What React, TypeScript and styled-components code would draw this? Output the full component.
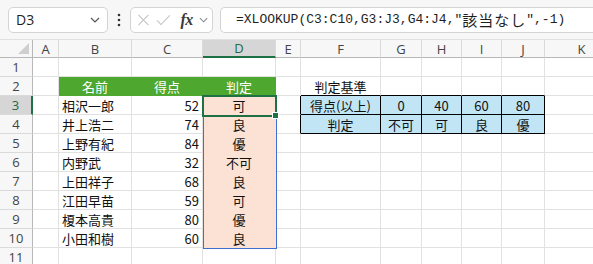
import React from "react";
import styled, { createGlobalStyle } from "styled-components";

const GlobalStyle = createGlobalStyle`
  html, body { margin: 0; padding: 0; background: #ffffff; overflow: hidden; }
  * { box-sizing: border-box; }
`;

const COLS = [33, 26, 73, 71, 73, 25, 80, 41, 40, 40, 43, 74];
const LETTERS = ["A", "B", "C", "D", "E", "F", "G", "H", "I", "J", "K"];
const GRID = "#e1e1e1";
const CJK = `"Noto Sans CJK JP", "Noto Sans", sans-serif`;
const UI = `"Open Sans", "Noto Sans", sans-serif`;

const Window = styled.div`
  width: 593px;
  height: 264px;
  overflow: hidden;
  background: #ffffff;
`;

const FormulaBar = styled.div`
  display: flex;
  align-items: center;
  height: 40px;
  padding-left: 8px;
  background: #f7f7f7;
  border-bottom: 1px solid #e0e0e0;
`;

const NameBox = styled.div`
  width: 100px;
  height: 26px;
  flex: none;
  display: flex;
  align-items: center;
  justify-content: space-between;
  padding: 0 7px 0 7px;
  background: #ffffff;
  border: 1px solid #d4d4d4;
  border-radius: 5px;
  font-family: ${UI};
  font-size: 14px;
  color: #1f1f1f;
`;

const Kebab = styled.div`
  width: 22px;
  flex: none;
  display: flex;
  justify-content: center;
  align-items: center;
`;

const FxGroup = styled.div`
  width: 83px;
  height: 26px;
  flex: none;
  display: flex;
  align-items: center;
  padding: 0 4px 0 6px;
  gap: 6px;
  background: #ffffff;
  border: 1px solid #d4d4d4;
  border-radius: 5px;
`;

const FxLabel = styled.span`
  font-family: "Liberation Serif", "DejaVu Serif", serif;
  font-style: italic;
  font-size: 16px;
  font-weight: bold;
  color: #3a3a3a;
  margin-left: 4px;
  letter-spacing: -0.5px;
`;

const FormulaInput = styled.div`
  flex: 1;
  height: 26px;
  margin-left: 7px;
  display: flex;
  align-items: center;
  padding-left: 15px;
  background: #ffffff;
  border: 1px solid #d4d4d4;
  border-right: none;
  border-radius: 5px 0 0 5px;
  font-family: "Liberation Mono", "DejaVu Sans Mono", monospace;
  font-size: 13px;
  color: #1f1f1f;
  white-space: pre;
`;

const CjkRun = styled.span`
  font-family: ${CJK};
  font-size: 15px;
  letter-spacing: 1px;
`;

const Sheet = styled.div`
  position: relative;
  display: grid;
  grid-template-columns: ${COLS.map((c) => `${c}px`).join(" ")};
  grid-template-rows: 18px;
  grid-auto-rows: 19px;
`;

const Corner = styled.div`
  position: relative;
  background: #f7f7f7;
  border-right: 1px solid #b8b8b8;
  border-bottom: 1px solid #b8b8b8;
  display: flex;
  align-items: flex-end;
  justify-content: flex-end;
  padding: 0 3px 3px 0;
`;

const ColHeader = styled.div<{ $active?: boolean }>`
  display: flex;
  align-items: center;
  justify-content: center;
  background: ${(p) => (p.$active ? "#d6d6d6" : "#f7f7f7")};
  border-right: 1px solid #dadada;
  border-bottom: ${(p) => (p.$active ? "2px solid #1e7145" : "1px solid #b8b8b8")};
  font-family: ${UI};
  font-size: 13px;
  color: ${(p) => (p.$active ? "#1e6b41" : "#444444")};
`;

const RowHeader = styled.div<{ $active?: boolean }>`
  display: flex;
  align-items: center;
  justify-content: center;
  background: ${(p) => (p.$active ? "#d6d6d6" : "#f7f7f7")};
  border-right: ${(p) => (p.$active ? "2px solid #1e7145" : "1px solid #b8b8b8")};
  border-bottom: 1px solid #dadada;
  font-family: ${UI};
  font-size: 13px;
  color: ${(p) => (p.$active ? "#1e6b41" : "#444444")};
`;

const Cell = styled.div<{
  $align?: "left" | "center" | "right";
  $bg?: string;
  $color?: string;
  $rb?: string;
  $bb?: string;
}>`
  display: flex;
  align-items: center;
  justify-content: ${(p) =>
    p.$align === "right" ? "flex-end" : p.$align === "center" ? "center" : "flex-start"};
  padding: 0 3px;
  background: ${(p) => p.$bg || "#ffffff"};
  border-right: 1px solid ${(p) => p.$rb || p.$bg || GRID};
  border-bottom: 1px solid ${(p) => p.$bb || p.$bg || GRID};
  font-family: ${CJK};
  font-size: 13px;
  color: ${(p) => p.$color || "#111111"};
  white-space: nowrap;
  overflow: hidden;
`;

const RangeBorder = styled.div`
  position: absolute;
  left: 203px;
  top: 56px;
  width: 74px;
  height: 153px;
  border: 1px solid #3f6fd0;
  pointer-events: none;
`;

const ActiveCell = styled.div`
  position: absolute;
  left: 202px;
  top: 55px;
  width: 75px;
  height: 22px;
  border: 2px solid #1e7145;
  pointer-events: none;
`;

const FillHandle = styled.div`
  position: absolute;
  left: 272px;
  top: 72px;
  width: 7px;
  height: 7px;
  background: #1e7145;
  border: 1px solid #ffffff;
`;

const GREEN = "#4ea72e";
const PEACH = "#fbe2d5";
const BLUE = "#c1e5f5";

type CellSpec = {
  text?: string;
  align?: "left" | "center" | "right";
  bg?: string;
  color?: string;
  rb?: string;
  bb?: string;
};

const students: [string, number, string][] = [
  ["相沢一郎", 52, "可"],
  ["井上浩二", 74, "良"],
  ["上野有紀", 84, "優"],
  ["内野武", 32, "不可"],
  ["上田祥子", 68, "良"],
  ["江田早苗", 59, "可"],
  ["榎本高貴", 80, "優"],
  ["小田和樹", 60, "良"],
];

function buildRows(): CellSpec[][] {
  const empty = (): CellSpec[] => Array.from({ length: 11 }, () => ({}));
  const rows: CellSpec[][] = [];
  // row 1
  rows.push(empty());
  // row 2
  const r2 = empty();
  r2[1] = { text: "名前", align: "center", bg: GREEN, color: "#ffffff" };
  r2[2] = { text: "得点", align: "center", bg: GREEN, color: "#ffffff" };
  r2[3] = { text: "判定", align: "center", bg: GREEN, color: "#ffffff" };
  r2[5] = { text: "判定基準", align: "center", bb: "#000" };
  for (let c = 6; c <= 9; c++) r2[c] = { bb: "#000" };
  rows.push(r2);
  const table: string[][] = [
    ["得点(以上)", "0", "40", "60", "80"],
    ["判定", "不可", "可", "良", "優"],
  ];
  students.forEach(([name, score, grade], i) => {
    const r = empty();
    r[1] = { text: name, align: "left" };
    r[2] = { text: String(score), align: "right" };
    r[3] = { text: grade, align: "center", bg: PEACH };
    if (i < 2) {
      r[4] = { rb: "#000" };
      table[i].forEach((t, k) => {
        r[5 + k] = { text: t, align: "center", bg: BLUE, rb: "#000", bb: "#000" };
      });
    }
    rows.push(r);
  });
  rows.push(empty());
  return rows;
}

const Chevron = () => (
  <svg width="10" height="6" viewBox="0 0 10 6">
    <path d="M1 1 L5 5 L9 1" fill="none" stroke="#555" strokeWidth="1.2" />
  </svg>
);

export default function App() {
  const rows = buildRows();
  return (
    <Window>
      <GlobalStyle />
      <FormulaBar>
        <NameBox>
          <span>D3</span>
          <Chevron />
        </NameBox>
        <Kebab>
          <svg width="4" height="14" viewBox="0 0 4 14">
            <circle cx="2" cy="2" r="1.3" fill="#333" />
            <circle cx="2" cy="7" r="1.3" fill="#333" />
            <circle cx="2" cy="12" r="1.3" fill="#333" />
          </svg>
        </Kebab>
        <FxGroup>
          <svg width="14" height="14" viewBox="0 0 14 14">
            <path d="M1.5 1.5 L12.5 12.5 M12.5 1.5 L1.5 12.5" stroke="#c4c4c4" strokeWidth="1.2" />
          </svg>
          <svg width="16" height="14" viewBox="0 0 16 14">
            <path d="M1 7.5 L5.5 12 L15 2" fill="none" stroke="#c4c4c4" strokeWidth="1.2" />
          </svg>
          <FxLabel>fx</FxLabel>
          <svg width="10" height="6" viewBox="0 0 10 6">
            <path d="M1 1 L5 5 L9 1" fill="none" stroke="#888" strokeWidth="1.1" />
          </svg>
        </FxGroup>
        <FormulaInput>
          =XLOOKUP(C3:C10,G3:J3,G4:J4,"<CjkRun>該当なし</CjkRun>",-1)
        </FormulaInput>
      </FormulaBar>
      <Sheet>
        <Corner>
          <svg width="11" height="11" viewBox="0 0 11 11">
            <path d="M11 0 L11 11 L0 11 Z" fill="#cfcfcf" />
          </svg>
        </Corner>
        {LETTERS.map((l) => (
          <ColHeader key={l} $active={l === "D"}>
            {l}
          </ColHeader>
        ))}
        {rows.map((r, ri) => (
          <React.Fragment key={ri}>
            <RowHeader $active={ri === 2}>{ri + 1}</RowHeader>
            {r.map((c, ci) => (
              <Cell
                key={ci}
                $align={c.align}
                $bg={c.bg}
                $color={c.color}
                $rb={c.rb}
                $bb={c.bb}
              >
                {c.text}
              </Cell>
            ))}
          </React.Fragment>
        ))}
        <RangeBorder />
        <ActiveCell />
        <FillHandle />
      </Sheet>
    </Window>
  );
}
